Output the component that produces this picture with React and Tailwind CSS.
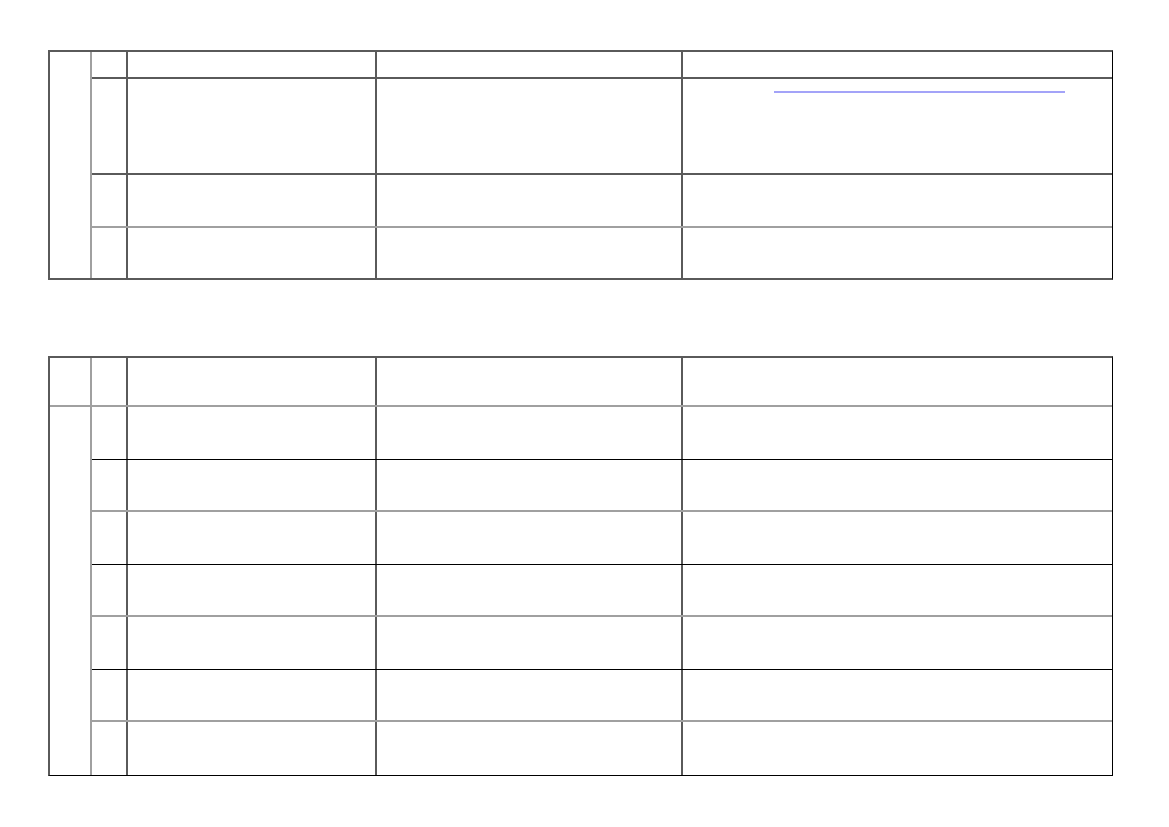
import React from 'react';

const dark = 'border-[#5a5a5a]';
const light = 'border-[#a0a0a0]';

const Cells = ({ children }) => (
  <>
    <div className={`w-[36px] shrink-0 border-r-2 ${dark}`}></div>
    <div className={`w-[249px] shrink-0 border-r-2 ${dark}`}></div>
    <div className={`w-[306px] shrink-0 border-r-2 ${dark}`}></div>
    <div className="flex-1">{children}</div>
  </>
);

const bodyRows = [
  'h-[53px] border-b border-black',
  'h-[52px] border-b-2 border-[#a0a0a0]',
  'h-[53px] border-b border-black',
  'h-[52px] border-b-2 border-[#a0a0a0]',
  'h-[53px] border-b border-black',
  'h-[52px] border-b-2 border-[#a0a0a0]',
  'h-[53px]',
];

const App = () => {
  return (
    <div className="bg-white min-h-screen w-[1169px] h-[827px] pt-[50px]" style={{ fontFamily: '"Liberation Sans", Arial, sans-serif' }}>

      {/* --- TABLE 1 --- */}
      <div className={`ml-[48px] w-[1065px] flex border-l-2 border-t-2 border-b-2 ${dark} border-r border-r-black`}>
        <div className={`w-[42px] shrink-0 border-r-2 ${light}`}></div>
        <div className="flex-1 flex flex-col">
          <div className={`h-[27px] flex border-b-2 ${dark}`}><Cells /></div>
          <div className={`h-[96px] flex border-b-2 ${dark}`}>
            <Cells>
              <a href="#" className="block ml-[91px] mt-[12px] w-[291px] h-[2px] bg-[#a3a3f8]"></a>
            </Cells>
          </div>
          <div className={`h-[53px] flex border-b-2 ${light}`}><Cells /></div>
          <div className="h-[50px] flex"><Cells /></div>
        </div>
      </div>

      {/* --- TABLE 2 --- */}
      <div className={`mt-[76px] ml-[48px] w-[1065px] flex flex-col border-l-2 border-t-2 ${dark} border-r border-r-black border-b border-b-black`}>
        <div className={`h-[49px] flex border-b-2 ${light}`}>
          <div className={`w-[42px] shrink-0 border-r-2 ${light}`}></div>
          <Cells />
        </div>
        <div className="flex">
          <div className={`w-[42px] shrink-0 border-r-2 ${light}`}></div>
          <div className="flex-1 flex flex-col">
            {bodyRows.map((cls, i) => (
              <div key={i} className={`flex ${cls}`}><Cells /></div>
            ))}
          </div>
        </div>
      </div>
    </div>
  );
};

export default App;
